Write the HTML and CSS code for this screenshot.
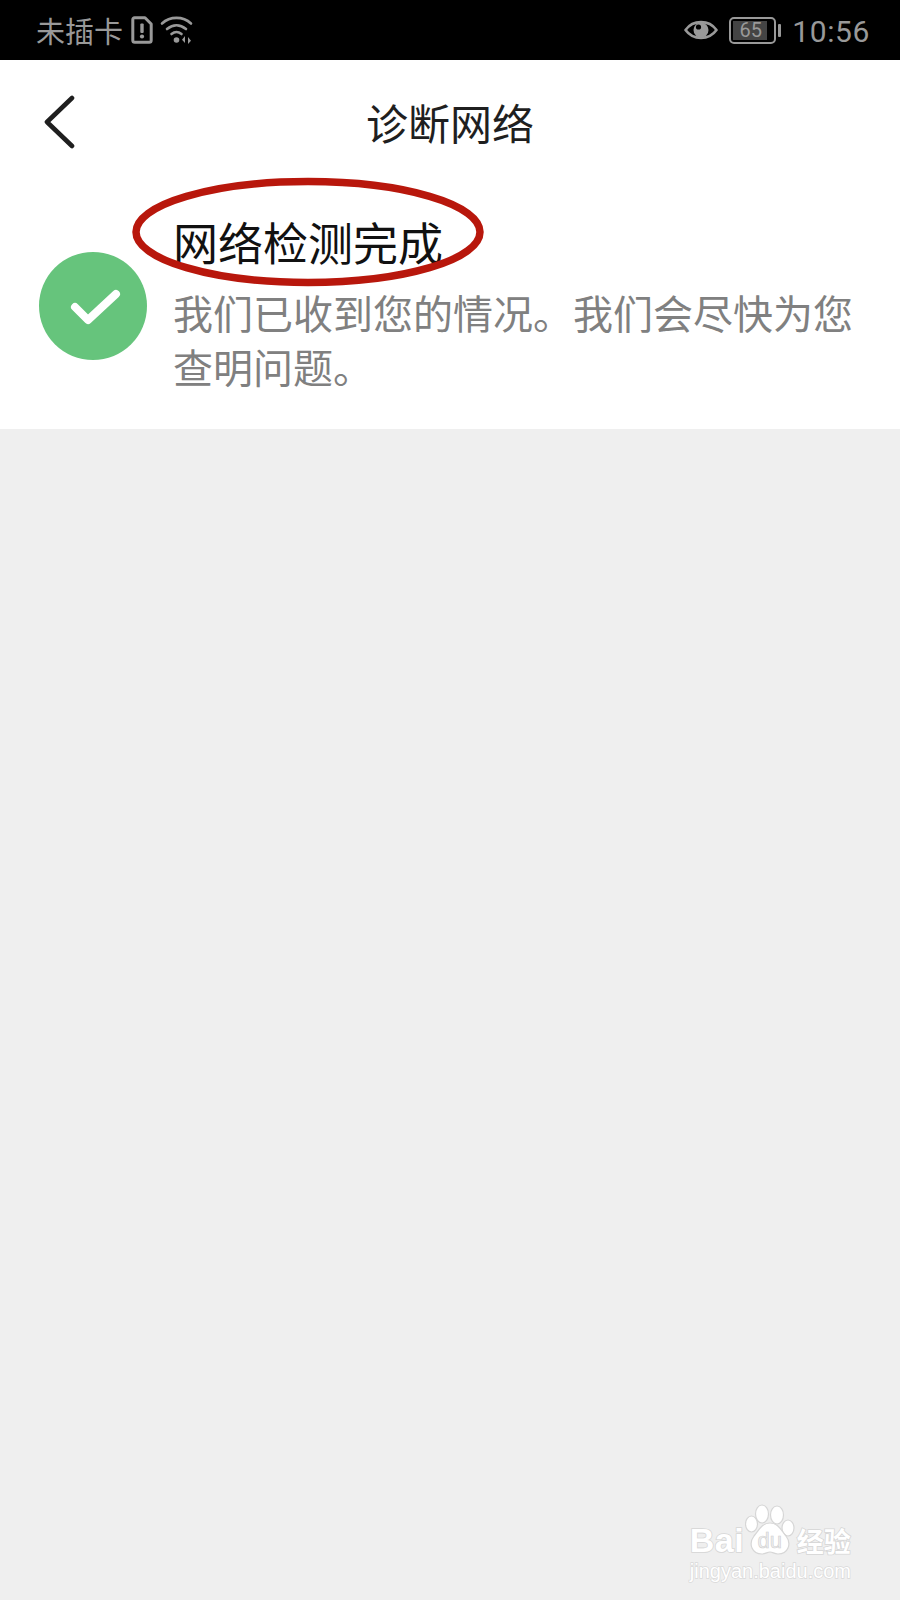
FILE: index.html
```html
<!DOCTYPE html>
<html lang="zh-CN">
<head>
    <meta charset="UTF-8">
    <meta name="viewport" content="width=device-width, initial-scale=1.0">
    <title>诊断网络</title>
    <link rel="stylesheet" href="styles.css">
</head>
<body>
    <div class="status-bar">
        <div class="status-left">
            <span class="carrier">未插卡</span>
            <svg class="sim-icon" width="22" height="28" viewBox="0 0 22 28">
                <path d="M3.5 1.8h10.5l6.2 6.2v16.2a2 2 0 0 1-2 2H3.8a2 2 0 0 1-2-2V3.5a1.7 1.7 0 0 1 1.7-1.7z" fill="none" stroke="#999" stroke-width="3" stroke-linejoin="round"/>
                <rect x="9.3" y="7.5" width="3.4" height="9.5" rx="1" fill="#999"/>
                <circle cx="11" cy="20.5" r="2.1" fill="#999"/>
            </svg>
            <svg class="wifi-icon" width="34" height="30" viewBox="0 0 34 30">
                <g fill="none" stroke="#999" stroke-width="2.6" stroke-linecap="round">
                    <path d="M2 8.5C10 1 23 1 31 8.5"/>
                    <path d="M7 14c6-5 13-5 19 0"/>
                    <path d="M11.5 19c3-2.4 7-2.4 10 0"/>
                </g>
                <circle cx="16.5" cy="25" r="2.8" fill="#999"/>
                <path d="M25 21v7l-3-3.2zM28 22v7l3-3.2z" fill="#999"/>
            </svg>
        </div>
        <div class="status-right">
            <svg class="eye-icon" width="34" height="24" viewBox="0 0 34 24">
                <path d="M1.5 12C9 1.5 25 1.5 32.5 12 25 22.5 9 22.5 1.5 12z" fill="none" stroke="#999" stroke-width="2.6" stroke-linejoin="round"/>
                <circle cx="17" cy="12" r="7.5" fill="#999"/>
                <circle cx="14.5" cy="9" r="2.6" fill="#000"/>
            </svg>
            <div class="battery">
                <div class="battery-body">
                    <div class="battery-level" style="width: 86%"></div>
                    <span class="battery-num">65</span>
                </div>
                <div class="battery-tip"></div>
            </div>
            <span class="clock">10:56</span>
        </div>
    </div>

    <div class="card">
        <header class="nav">
            <svg class="back-icon" width="34" height="54" viewBox="0 0 34 54">
                <path d="M30 3 5 27l25 24" fill="none" stroke="#1f1f1f" stroke-width="4.6" stroke-linecap="round" stroke-linejoin="round"/>
            </svg>
            <h1 class="nav-title">诊断网络</h1>
        </header>

        <section class="result">
            <svg class="ok-icon" width="108" height="108" viewBox="0 0 108 108">
                <circle cx="54" cy="54" r="54" fill="#66c47c"/>
                <path d="M36 55l13 13 28-26" fill="none" stroke="#fff" stroke-width="8" stroke-linecap="round" stroke-linejoin="round"/>
            </svg>
            <div class="result-text">
                <h2 class="result-title">网络检测完成</h2>
                <p class="result-desc">我们已收到您的情况。我们会尽快为您查明问题。</p>
            </div>
            <!-- red ring drawn on top of the heading -->
            <svg class="ring" width="360" height="116" viewBox="0 0 360 116">
                <ellipse cx="180" cy="58" rx="172" ry="50.5" fill="none" stroke="#b8170c" stroke-width="7.5"/>
            </svg>
        </section>
    </div>

    <main class="blank">
        <div class="mark">
            <div class="mark-top">
                <span class="mark-bai">Bai</span>
                <div class="mark-paw">
                    <svg width="50" height="52" viewBox="0 0 50 52">
                        <g fill="#fff" stroke="#d6d6d6" stroke-width="1.2">
                            <ellipse cx="6.5" cy="20" rx="6" ry="8"/>
                            <ellipse cx="17" cy="10" rx="6.5" ry="9"/>
                            <ellipse cx="32" cy="11" rx="6.5" ry="9"/>
                            <ellipse cx="43" cy="24" rx="6" ry="8"/>
                            <path d="M25 19c8 0 11 7 16 13 6 8 2 18-8 18-4 0-5-2-8-2s-4 2-8 2C7 50 3 40 9 32c5-6 8-13 16-13z"/>
                        </g>
                    </svg>
                    <span class="mark-du">du</span>
                </div>
                <span class="mark-cn">经验</span>
            </div>
            <div class="mark-url">jingyan.baidu.com</div>
        </div>
    </main>
</body>
</html>
```

FILE: styles.css
```css
* {
    box-sizing: border-box;
}
html, body {
    height: 100%;
}
body {
    margin: 0;
    display: flex;
    flex-direction: column;
    background-color: #efefef;
    font-family: "Noto Sans CJK SC", "Noto Sans", sans-serif;
}

/* status bar */
.status-bar {
    height: 60px;
    flex-shrink: 0;
    background-color: #000;
    color: #999;
    display: flex;
    justify-content: space-between;
    align-items: center;
    padding: 0 30px 0 36px;
}
.status-left, .status-right {
    display: flex;
    align-items: center;
}
.carrier {
    font-size: 29px;
    line-height: 36px;
}
.sim-icon {
    margin-left: 8px;
}
.wifi-icon {
    margin-left: 7px;
}
.eye-icon {
    margin-right: 11px;
}
.battery {
    display: flex;
    align-items: center;
    margin-right: 11px;
}
.battery-body {
    position: relative;
    width: 47px;
    height: 27px;
    border: 2.5px solid #999;
    border-radius: 5px;
    padding: 2px;
}
.battery-level {
    height: 100%;
    background-color: #444;
}
.battery-num {
    position: absolute;
    left: 0;
    right: 4px;
    top: 0;
    text-align: center;
    font-family: Roboto, sans-serif;
    font-size: 20px;
    line-height: 22px;
    color: #999;
}
.battery-tip {
    width: 3px;
    height: 13px;
    margin-left: 2px;
    border-radius: 1px;
    background-color: #999;
}
.clock {
    padding-top: 4px;
    font-family: Roboto, sans-serif;
    font-size: 30px;
    line-height: 36px;
    letter-spacing: 0.6px;
}

/* white card */
.card {
    background-color: #fff;
    flex-shrink: 0;
    padding-bottom: 36px;
}
.nav {
    position: relative;
    height: 128px;
    display: flex;
    align-items: center;
    justify-content: center;
}
.back-icon {
    position: absolute;
    left: 42px;
    top: 35px;
}
.nav-title {
    margin: 0 0 4px;
    font-size: 42px;
    line-height: 56px;
    font-weight: 400;
    color: #1f1f1f;
}
.result {
    position: relative;
    display: flex;
    align-items: center;
    gap: 26px;
    padding: 26px 38px 0 39px;
}
.ok-icon {
    flex-shrink: 0;
    margin-top: 5px;
}
.result-text {
    flex: 1;
}
.result-title {
    margin: 0 0 15px;
    font-size: 45px;
    line-height: 56px;
    font-weight: 400;
    color: #111;
}
.result-desc {
    margin: 0;
    font-size: 40px;
    line-height: 54px;
    color: #808080;
}
.ring {
    position: absolute;
    left: 128px;
    top: -14px;
}

/* grey area with the site mark in its corner */
.blank {
    flex: 1;
    display: flex;
    justify-content: flex-end;
    align-items: flex-end;
    padding: 0 49px 17px 0;
}
.mark {
    display: flex;
    flex-direction: column;
    align-items: flex-start;
    color: #fff;
}
.mark-top {
    display: flex;
    align-items: flex-end;
}
.mark-bai {
    width: 55px;
    font-family: "Liberation Sans", sans-serif;
    font-size: 34px;
    line-height: 32px;
    font-weight: 700;
    letter-spacing: 0.5px;
    -webkit-text-stroke: 1.6px #d6d6d6;
    paint-order: stroke fill;
}
.mark-paw {
    position: relative;
    width: 50px;
    height: 52px;
}
.mark-paw svg {
    display: block;
}
.mark-du {
    position: absolute;
    left: 0;
    right: 0;
    bottom: 3px;
    text-align: center;
    font-family: "Liberation Sans", sans-serif;
    font-size: 22px;
    line-height: 24px;
    color: #efefef;
    -webkit-text-stroke: 0.6px #cfcfcf;
}
.mark-cn {
    margin-left: 2px;
    font-size: 27px;
    line-height: 30px;
    font-weight: 700;
    -webkit-text-stroke: 1.6px #d6d6d6;
    paint-order: stroke fill;
}
.mark-url {
    margin-top: 3px;
    font-family: "Liberation Sans", sans-serif;
    font-size: 20px;
    line-height: 24px;
    -webkit-text-stroke: 1.4px #d9d9d9;
    paint-order: stroke fill;
}
```
